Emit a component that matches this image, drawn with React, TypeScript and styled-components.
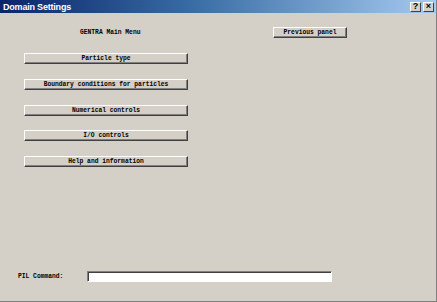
import React from 'react';
import styled, { createGlobalStyle } from 'styled-components';

const GlobalStyle = createGlobalStyle`
  html, body {
    margin: 0;
    padding: 0;
    background: #d4d0c8;
  }
`;

const Window = styled.div`
  width: 437px;
  height: 302px;
  box-sizing: border-box;
  display: flex;
  flex-direction: column;
  background: #d4d0c8;
  border-right: 1px solid #808080;
  border-bottom: 1px solid #808080;
  font-family: "Liberation Mono", "DejaVu Sans Mono", monospace;
  font-weight: bold;
  font-size: 6.3px;
  color: #000;
`;

const TitleBar = styled.div`
  height: 13px;
  display: flex;
  align-items: center;
  justify-content: space-between;
  padding: 0 2px 0 3px;
  background: linear-gradient(to right, #0a246a 0%, #3a6ea5 45%, #a6caf0 100%);
`;

const Caption = styled.span`
  font-family: "Liberation Sans", Arial, sans-serif;
  font-size: 9px;
  font-weight: bold;
  letter-spacing: -0.2px;
  color: #fff;
`;

const CaptionButtons = styled.div`
  display: flex;
  gap: 2px;
`;

const CaptionButton = styled.div`
  width: 11px;
  height: 10px;
  box-sizing: border-box;
  display: flex;
  align-items: center;
  justify-content: center;
  background: #d4d0c8;
  border-top: 1px solid #fff;
  border-left: 1px solid #fff;
  border-right: 1px solid #404040;
  border-bottom: 1px solid #404040;
  font-family: "Liberation Sans", Arial, sans-serif;
  font-size: 9px;
  font-weight: bold;
  line-height: 1;
`;

const Body = styled.div`
  flex: 1;
  display: flex;
  flex-direction: column;
  padding: 14px 0 0 0;
`;

const HeaderRow = styled.div`
  display: flex;
  align-items: center;
  height: 11px;
`;

const MenuTitle = styled.span`
  margin-left: 80px;
  width: 193px;
`;

const Button = styled.div<{ $width: number }>`
  width: ${p => p.$width}px;
  height: 11px;
  box-sizing: border-box;
  display: flex;
  align-items: center;
  justify-content: center;
  background: #d4d0c8;
  border-top: 1px solid #fff;
  border-left: 1px solid #fff;
  border-right: 1px solid #404040;
  border-bottom: 1px solid #404040;
  box-shadow: inset -1px -1px 0 #808080;
  white-space: nowrap;
`;

const Menu = styled.div`
  display: flex;
  flex-direction: column;
  gap: 14.75px;
  margin: 15px 0 0 24px;
`;

const CommandRow = styled.div`
  margin-top: auto;
  margin-bottom: 19px;
  display: flex;
  align-items: center;
  padding-left: 18px;
`;

const CommandLabel = styled.span`
  width: 69px;
`;

const CommandInput = styled.div`
  width: 245px;
  height: 11px;
  box-sizing: border-box;
  background: #fff;
  border-top: 1px solid #808080;
  border-left: 1px solid #808080;
  border-right: 1px solid #fff;
  border-bottom: 1px solid #fff;
  box-shadow: inset 1px 1px 0 #404040;
`;

const items = [
  'Particle type',
  'Boundary conditions for particles',
  'Numerical controls',
  'I/O controls',
  'Help and information',
];

export default function App() {
  return (
    <>
      <GlobalStyle />
      <Window>
        <TitleBar>
          <Caption>Domain Settings</Caption>
          <CaptionButtons>
            <CaptionButton>?</CaptionButton>
            <CaptionButton>×</CaptionButton>
          </CaptionButtons>
        </TitleBar>
        <Body>
          <HeaderRow>
            <MenuTitle>GENTRA Main Menu</MenuTitle>
            <Button $width={74}>Previous panel</Button>
          </HeaderRow>
          <Menu>
            {items.map(label => (
              <Button key={label} $width={164}>{label}</Button>
            ))}
          </Menu>
          <CommandRow>
            <CommandLabel>PIL Command:</CommandLabel>
            <CommandInput />
          </CommandRow>
        </Body>
      </Window>
    </>
  );
}
